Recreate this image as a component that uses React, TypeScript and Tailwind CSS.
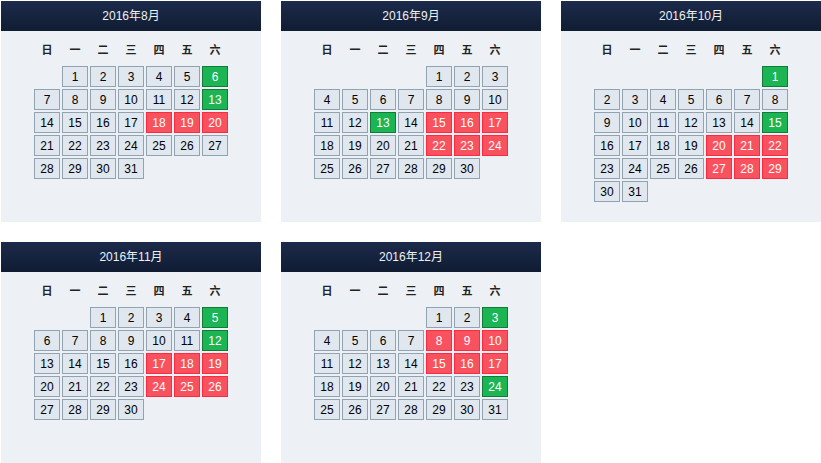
import React from 'react';

type Month = {
  title: string;
  offset: number;
  days: number;
  green: number[];
  red: number[];
};

const months: Month[] = [
  { title: '2016年8月', offset: 1, days: 31, green: [6, 13], red: [18, 19, 20] },
  { title: '2016年9月', offset: 4, days: 30, green: [13], red: [15, 16, 17, 22, 23, 24] },
  { title: '2016年10月', offset: 6, days: 31, green: [1, 15], red: [20, 21, 22, 27, 28, 29] },
  { title: '2016年11月', offset: 2, days: 30, green: [5, 12], red: [17, 18, 19, 24, 25, 26] },
  { title: '2016年12月', offset: 4, days: 31, green: [3, 24], red: [8, 9, 10, 15, 16, 17] },
];

const weekdays = ['日', '一', '二', '三', '四', '五', '六'];

const DayCell: React.FC<{ day: number; month: Month }> = ({ day, month }) => {
  let cls = 'bg-[#e1e7ef] border-[#91a3b0] text-black';
  if (month.green.includes(day)) cls = 'bg-[#1bb553] border-[#137a3a] text-white';
  if (month.red.includes(day)) cls = 'bg-[#f8525f] border-[#ff2a40] text-white';
  return (
    <div className={`h-[21px] w-[26px] border flex items-center justify-center text-[12px] leading-none ${cls}`}>
      {day}
    </div>
  );
};

const Calendar: React.FC<{ month: Month }> = ({ month }) => {
  const cells: (number | null)[] = [];
  for (let i = 0; i < month.offset; i++) cells.push(null);
  for (let d = 1; d <= month.days; d++) cells.push(d);

  return (
    <div className="w-[260px] h-[221px] flex flex-col bg-[#edf1f5]">
      <div className="h-[30px] flex items-center justify-center bg-gradient-to-b from-[#1c2b4b] to-[#101c32] text-[#eef1f6] text-[12px]">
        {month.title}
      </div>
      <div className="flex flex-col items-center pt-[11px]">
        <div className="grid grid-cols-[repeat(7,26px)] gap-x-[2px] h-4">
          {weekdays.map((w) => (
            <div key={w} className="flex items-center justify-center text-[11px] font-bold text-[#222]">
              {w}
            </div>
          ))}
        </div>
        <div className="mt-[8px] grid grid-cols-[repeat(7,26px)] gap-x-[2px] gap-y-[2px]">
          {cells.map((d, i) =>
            d === null ? <div key={i} className="h-[21px] w-[26px]" /> : <DayCell key={i} day={d} month={month} />
          )}
        </div>
      </div>
    </div>
  );
};

export default function App() {
  return (
    <div
      className="w-[821px] h-[463px] bg-white pl-[1px] pt-[1px]"
      style={{ fontFamily: '"Liberation Sans", Arial, "Noto Sans CJK SC", sans-serif' }}
    >
      <div className="grid grid-cols-[repeat(3,260px)] gap-x-[20px] gap-y-[20px]">
        {months.map((m) => (
          <Calendar key={m.title} month={m} />
        ))}
      </div>
    </div>
  );
}
